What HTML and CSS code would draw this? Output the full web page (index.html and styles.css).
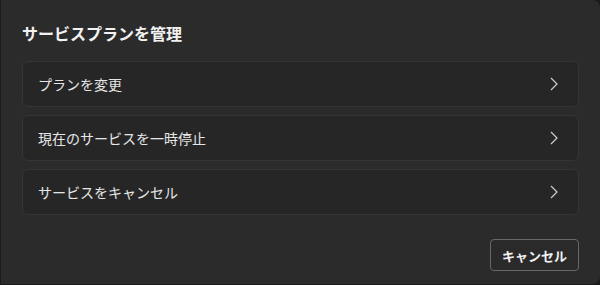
FILE: index.html
```html
<!DOCTYPE html>
<html lang="ja">
<head>
<meta charset="utf-8">
<link rel="stylesheet" href="styles.css">
</head>
<body>
<div class="dialog">
  <h1 class="title">サービスプランを管理</h1>
  <div class="options">
    <div class="option"><span>プランを変更</span><svg class="chev" viewBox="0 0 8 14" width="8" height="14"><path d="M1 1 L7 7 L1 13" fill="none" stroke="#cfcfcf" stroke-width="1.2"/></svg></div>
    <div class="option"><span>現在のサービスを一時停止</span><svg class="chev" viewBox="0 0 8 14" width="8" height="14"><path d="M1 1 L7 7 L1 13" fill="none" stroke="#cfcfcf" stroke-width="1.2"/></svg></div>
    <div class="option"><span>サービスをキャンセル</span><svg class="chev" viewBox="0 0 8 14" width="8" height="14"><path d="M1 1 L7 7 L1 13" fill="none" stroke="#cfcfcf" stroke-width="1.2"/></svg></div>
  </div>
  <div class="footer">
    <button class="btn">キャンセル</button>
  </div>
</div>
</body>
</html>
```
FILE: styles.css
```css
html, body {
  margin: 0;
  padding: 0;
  background: #1b1b1b;
}
body {
  font-family: "Noto Sans CJK JP", "Noto Sans", sans-serif;
  color: #ececec;
}
.dialog {
  box-sizing: border-box;
  width: 599px;
  height: 284px;
  margin-left: 1px;
  background: #2b2b2b;
  border-radius: 0 8px 8px 0;
  padding: 20px 21px 0 21px;
  display: flex;
  flex-direction: column;
}
.title {
  margin: 0;
  font-size: 16px;
  font-weight: 700;
  line-height: 26px;
  color: #f2f2f2;
}
.options {
  margin-top: 15px;
  display: flex;
  flex-direction: column;
  gap: 8px;
}
.option {
  box-sizing: border-box;
  height: 46px;
  border: 1px solid #353535;
  border-radius: 6px;
  background: #262626;
  display: flex;
  align-items: center;
  justify-content: space-between;
  padding: 0 20px 0 15px;
  font-size: 14px;
  color: #e6e6e6;
}
.chev {
  display: block;
}
.footer {
  margin-top: 24px;
  display: flex;
  justify-content: flex-end;
}
.btn {
  box-sizing: border-box;
  width: 89px;
  height: 32px;
  background: #2a2a2a;
  border: 1px solid #686868;
  border-radius: 4px;
  color: #f2f2f2;
  font-family: "Noto Sans CJK JP", "Noto Sans", sans-serif;
  font-size: 13px;
  font-weight: 700;
  padding: 0;
}
```
